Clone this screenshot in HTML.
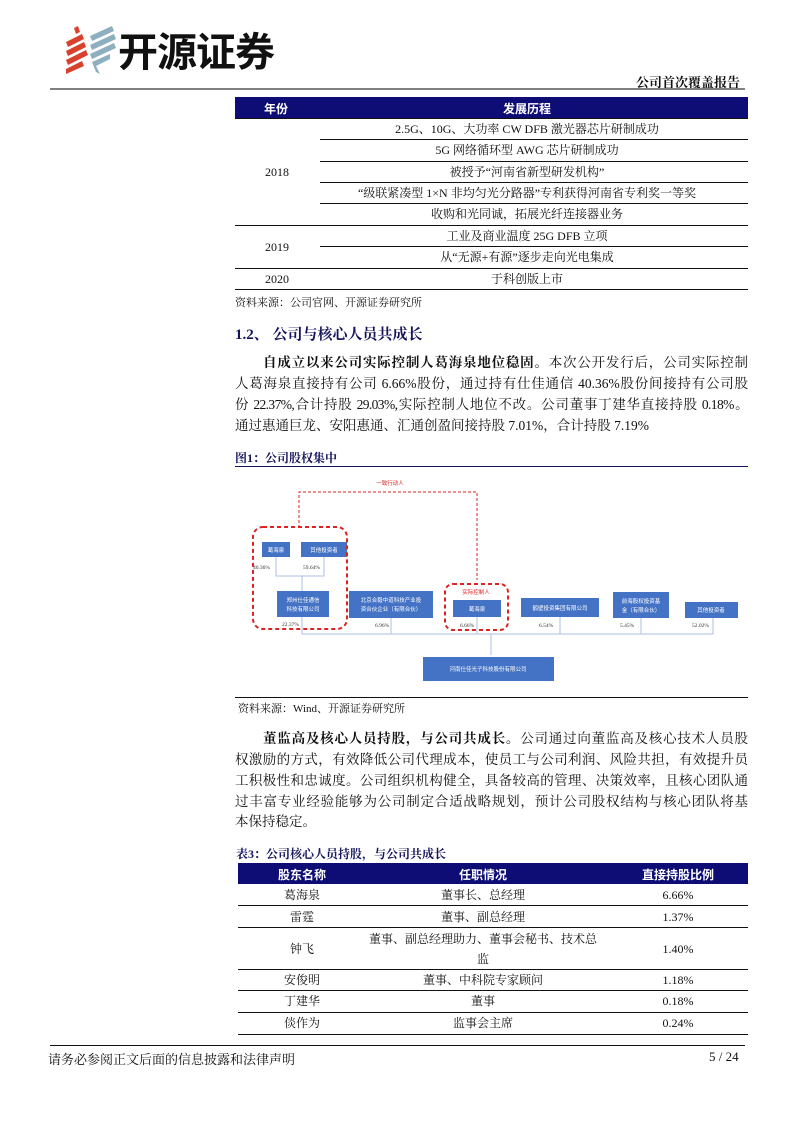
<!DOCTYPE html>
<html><head><meta charset="utf-8">
<style>
*{margin:0;padding:0;box-sizing:border-box}
body{width:793px;height:1122px;background:#fff;position:relative;overflow:hidden;font-family:"Liberation Serif","Noto Serif CJK SC",serif;color:#111}
.a{position:absolute;white-space:nowrap}
.navy{background:#0d0d75}
.hd{color:#fff;font-weight:bold;font-size:12px;font-family:"Liberation Sans","Noto Sans CJK SC",sans-serif}
.c{text-align:center;transform:translateX(-50%)}
.l{position:absolute;height:1px;background:#111}
.t{font-size:12px;line-height:14px}
.p{position:absolute;left:235px;width:513px;font-size:13.5px;line-height:21px;text-align:justify;text-align-last:justify;white-space:nowrap}
</style></head><body>
<!-- logo -->
<svg class="a" style="left:62px;top:26px" width="56" height="48" viewBox="0 0 56 48">
<g fill="#d9412f">
<polygon points="12,2 16,0 18,6 14,8"/>
<polygon points="4,16 20,8 22,13 6,21"/>
<polygon points="4,25 22,16 24,21 6,30"/>
<polygon points="4,34 24,24 26,29 6,39"/>
<polygon points="4,43 20,35 22,40 4,48"/>
</g>
<g fill="#8eafc0">
<polygon points="28,10 50,0 52,5 30,15"/>
<polygon points="28,19 52,8 54,13 30,24"/>
<polygon points="28,28 52,17 54,22 30,33"/>
<polygon points="30,36 48,28 48,33 34,40 38,48 34,46"/>
</g>
</svg>
<div class="a" style="left:118px;top:26px;font-size:40px;font-weight:bold;font-family:'Noto Sans CJK SC',sans-serif;line-height:46px;letter-spacing:-1px">开源证券</div>
<div class="a" style="left:636px;top:72px;font-size:13px;font-weight:bold;font-family:'Noto Serif CJK SC',serif">公司首次覆盖报告</div>
<div class="a" style="left:50px;top:88px;width:695px;height:2px;background:#808080"></div>

<!-- table 1 -->
<div class="a navy" style="left:235px;top:97px;width:513px;height:21px"></div>
<div class="a hd c" style="left:276px;top:100px">年份</div>
<div class="a hd c" style="left:527px;top:100px">发展历程</div>
<div class="l" style="left:235px;top:118px;width:513px"></div>
<div class="a t c" style="left:527px;top:122px">2.5G、10G、大功率 CW DFB 激光器芯片研制成功</div>
<div class="l" style="left:320px;top:139px;width:428px"></div>
<div class="a t c" style="left:527px;top:143px">5G 网络循环型 AWG 芯片研制成功</div>
<div class="l" style="left:320px;top:161px;width:428px"></div>
<div class="a t c" style="left:527px;top:165px">被授予“河南省新型研发机构”</div>
<div class="l" style="left:320px;top:182px;width:428px"></div>
<div class="a t c" style="left:527px;top:186px">“级联紧凑型 1×N 非均匀光分路器”专利获得河南省专利奖一等奖</div>
<div class="l" style="left:320px;top:203px;width:428px"></div>
<div class="a t c" style="left:527px;top:207px">收购和光同诚，拓展光纤连接器业务</div>
<div class="l" style="left:235px;top:225px;width:513px"></div>
<div class="a t c" style="left:527px;top:229px">工业及商业温度 25G DFB 立项</div>
<div class="l" style="left:320px;top:246px;width:428px"></div>
<div class="a t c" style="left:527px;top:250px">从“无源+有源”逐步走向光电集成</div>
<div class="l" style="left:235px;top:268px;width:513px"></div>
<div class="a t c" style="left:527px;top:272px">于科创版上市</div>
<div class="l" style="left:235px;top:289px;width:513px"></div>
<div class="a t c" style="left:277px;top:165px">2018</div>
<div class="a t c" style="left:277px;top:240px">2019</div>
<div class="a t c" style="left:277px;top:272px">2020</div>
<div class="a" style="left:235px;top:294px;font-size:11px">资料来源：公司官网、开源证券研究所</div>

<div class="a" style="left:235px;top:323px;font-size:15px;font-weight:bold;color:#14145e">1.2、 公司与核心人员共成长</div>
<div class="p" style="top:352px;padding-left:28px"><b>自成立以来公司实际控制人葛海泉地位稳固。</b>本次公开发行后，公司实际控制</div>
<div class="p" style="top:373px">人葛海泉直接持有公司 6.66%股份，通过持有仕佳通信 40.36%股份间接持有公司股</div>
<div class="p" style="top:394px;letter-spacing:-0.6px">份 22.37%,合计持股 29.03%,实际控制人地位不改。公司董事丁建华直接持股 0.18%。</div>
<div class="p" style="top:415px;text-align-last:left">通过惠通巨龙、安阳惠通、汇通创盈间接持股 7.01%，合计持股 7.19%</div>

<div class="a" style="left:235px;top:449px;font-size:12px;font-weight:bold;color:#14145e">图1：公司股权集中</div>
<div class="a" style="left:235px;top:466px;width:513px;height:1px;background:#14145e"></div>

<svg class="a" style="left:0;top:0" width="793" height="700" viewBox="0 0 793 700" font-family="Noto Sans CJK SC,sans-serif">
<g stroke="#a9c0e6" stroke-width="1" fill="none">
<path d="M276 556V576H324V556M302 576V591"/>
<path d="M302 617V634H713V618M391 618V634M477 617V634M560 617V634M641 618V634M491 634V655"/>
</g>
<g fill="#4472c4">
<rect x="262" y="542" width="28" height="15"/><rect x="301" y="542" width="46" height="15"/>
<rect x="277" y="591" width="52" height="26"/><rect x="349" y="591" width="84" height="27"/>
<rect x="453" y="600" width="48" height="17"/><rect x="521" y="598" width="78" height="19"/>
<rect x="613" y="592" width="56" height="26"/><rect x="685" y="602" width="53" height="16"/>
<rect x="423" y="657" width="131" height="24"/>
</g>
<g fill="#fff" font-size="5.5" text-anchor="middle">
<text x="276" y="552">葛海泉</text><text x="324" y="552">其他投资者</text>
<text x="303" y="602">郑州仕佳通信</text><text x="303" y="611">科技有限公司</text>
<text x="391" y="602">北京合毅中道科技产业投</text><text x="391" y="611">资合伙企业（有限合伙）</text>
<text x="477" y="611">葛海泉</text><text x="560" y="610">鹤壁投资集团有限公司</text>
<text x="641" y="603">前海股权投资基</text><text x="641" y="612">金（有限合伙）</text>
<text x="711" y="612">其他投资者</text><text x="488" y="671">河南仕佳光子科技股份有限公司</text>
</g>
<g font-size="5.5" fill="#333" font-family="Liberation Serif,serif">
<text x="253" y="569">40.36%</text><text x="303" y="569">59.64%</text><text x="282" y="626">22.37%</text>
<text x="375" y="627">6.96%</text><text x="460" y="627">6.66%</text><text x="539" y="627">6.54%</text>
<text x="620" y="627">5.45%</text><text x="692" y="627">52.02%</text>
</g>
<g stroke="#d22" fill="none" stroke-dasharray="4,3">
<rect x="253" y="527" width="94" height="102" rx="10" stroke-width="2"/>
<rect x="445" y="584" width="63" height="46" rx="8" stroke-width="2"/>
<path d="M299 528V492H477V580" stroke-width="1" stroke-dasharray="3,2"/>
</g>
<text x="390" y="485" font-size="5.5" fill="#d22" text-anchor="middle">一致行动人</text>
<text x="476" y="594" font-size="5.5" fill="#d22" text-anchor="middle">实际控制人</text>
</svg>

<div class="a" style="left:235px;top:697px;width:513px;height:1px;background:#111"></div>
<div class="a" style="left:238px;top:700px;font-size:11px">资料来源：Wind、开源证券研究所</div>

<div class="p" style="top:728px;padding-left:28px"><b>董监高及核心人员持股，与公司共成长。</b>公司通过向董监高及核心技术人员股</div>
<div class="p" style="top:749px">权激励的方式，有效降低公司代理成本，使员工与公司利润、风险共担，有效提升员</div>
<div class="p" style="top:770px">工积极性和忠诚度。公司组织机构健全，具备较高的管理、决策效率，且核心团队通</div>
<div class="p" style="top:791px">过丰富专业经验能够为公司制定合适战略规划，预计公司股权结构与核心团队将基</div>
<div class="p" style="top:811px;text-align-last:left">本保持稳定。</div>

<div class="a" style="left:236px;top:845px;font-size:12px;font-weight:bold;color:#14145e">表3：公司核心人员持股，与公司共成长</div>
<div class="a navy" style="left:238px;top:863px;width:510px;height:21px"></div>
<div class="a hd c" style="left:302px;top:866px">股东名称</div>
<div class="a hd c" style="left:483px;top:866px">任职情况</div>
<div class="a hd c" style="left:678px;top:866px">直接持股比例</div>
<div class="a t c" style="left:302px;top:888px">葛海泉</div><div class="a t c" style="left:483px;top:888px">董事长、总经理</div><div class="a t c" style="left:678px;top:888px">6.66%</div>
<div class="l" style="left:238px;top:905px;width:510px"></div>
<div class="a t c" style="left:302px;top:910px">雷霆</div><div class="a t c" style="left:483px;top:910px">董事、副总经理</div><div class="a t c" style="left:678px;top:910px">1.37%</div>
<div class="l" style="left:238px;top:927px;width:510px"></div>
<div class="a t c" style="left:302px;top:942px">钟飞</div><div class="a t c" style="left:483px;top:932px">董事、副总经理助力、董事会秘书、技术总</div><div class="a t c" style="left:483px;top:952px">监</div><div class="a t c" style="left:678px;top:942px">1.40%</div>
<div class="l" style="left:238px;top:969px;width:510px"></div>
<div class="a t c" style="left:302px;top:973px">安俊明</div><div class="a t c" style="left:483px;top:973px">董事、中科院专家顾问</div><div class="a t c" style="left:678px;top:973px">1.18%</div>
<div class="l" style="left:238px;top:990px;width:510px"></div>
<div class="a t c" style="left:302px;top:994px">丁建华</div><div class="a t c" style="left:483px;top:994px">董事</div><div class="a t c" style="left:678px;top:994px">0.18%</div>
<div class="l" style="left:238px;top:1012px;width:510px"></div>
<div class="a t c" style="left:302px;top:1016px">倓作为</div><div class="a t c" style="left:483px;top:1016px">监事会主席</div><div class="a t c" style="left:678px;top:1016px">0.24%</div>
<div class="l" style="left:238px;top:1034px;width:510px"></div>

<div class="a" style="left:50px;top:1045px;width:695px;height:1px;background:#111"></div>
<div class="a" style="left:48px;top:1049px;font-size:13px">请务必参阅正文后面的信息披露和法律声明</div>
<div class="a" style="left:709px;top:1049px;font-size:13px">5 / 24</div>
</body></html>
